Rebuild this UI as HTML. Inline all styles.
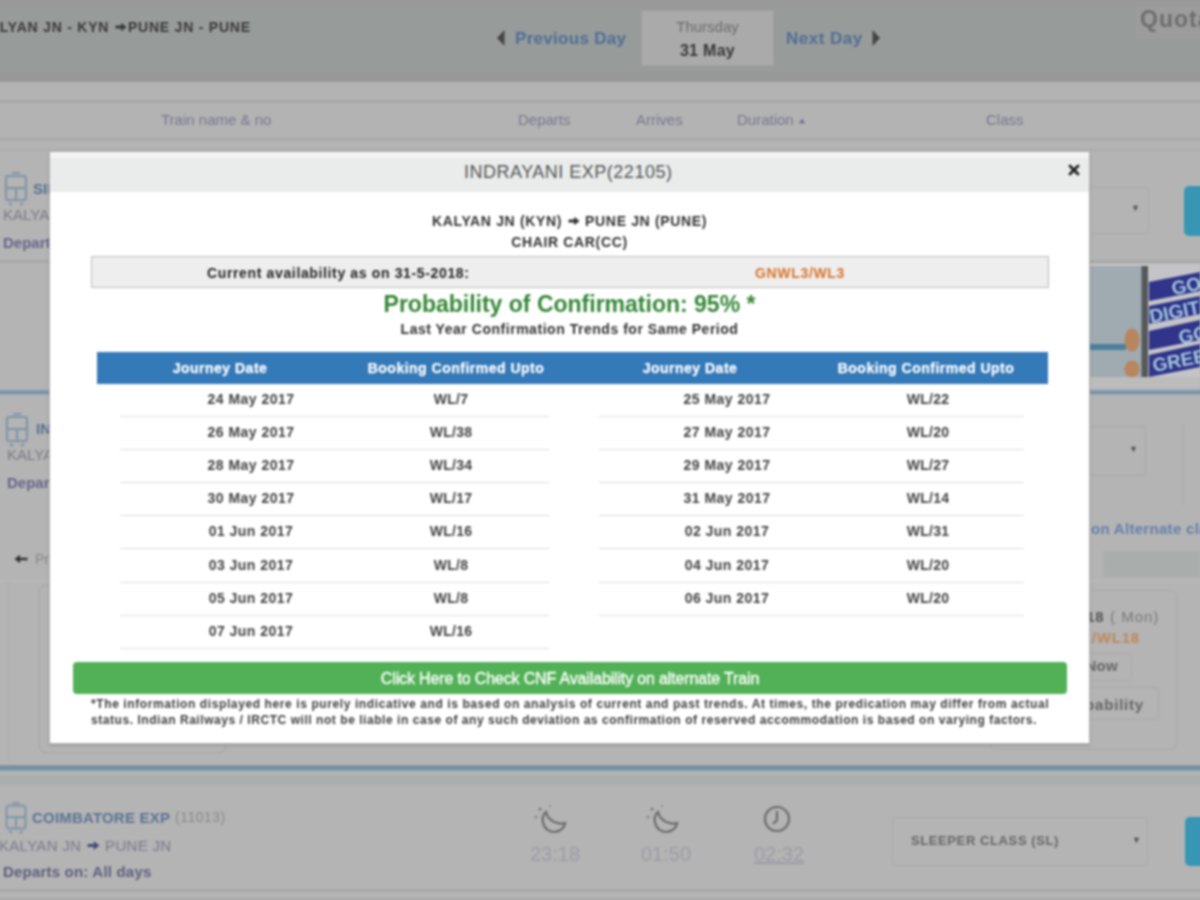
<!DOCTYPE html>
<html><head><meta charset="utf-8">
<style>
html,body{margin:0;padding:0;width:1200px;height:900px;overflow:hidden;background:#b4b4b4;font-family:"Liberation Sans",sans-serif;}
.a{position:absolute;}
.t{position:absolute;white-space:nowrap;line-height:1;}
.b{font-weight:bold;}
.c{text-align:center;}
</style></head><body>
<div style="position:absolute;left:-10px;top:-10px;width:1220px;height:920px;filter:blur(0.8px)"><div style="position:absolute;left:10px;top:10px;width:1200px;height:900px">
<!-- ===== background page ===== -->
<div class="a" style="left:-10px;top:-10px;width:1220px;height:18px;background:#999999"></div>
<div class="a" style="left:-10px;top:8px;width:1220px;height:64px;background:#979b99"></div>
<div class="a" style="left:-10px;top:72px;width:1220px;height:10px;background:#989898"></div>
<div class="a" style="left:-10px;top:82px;width:1220px;height:18px;background:#b3b3b3"></div>
<div class="a" style="left:-10px;top:100px;width:1220px;height:3px;background:#a8a8a8"></div>
<div class="a" style="left:-10px;top:103px;width:1220px;height:35px;background:#b3b3b3"></div>
<div class="a" style="left:-10px;top:138px;width:1220px;height:3px;background:#a8a8a8"></div>
<div class="a" style="left:-10px;top:149px;width:1220px;height:2px;background:#acacac"></div>

<div class="t b" style="left:-22px;top:20px;font-size:14px;letter-spacing:0.78px;color:#3a3a3a">KALYAN JN - KYN <svg width="12" height="10" viewBox="0 0 12 10" style="vertical-align:0px;margin:0 1px"><path d="M0.5 3.6 H6.2 V0.8 L11.5 5 L6.2 9.2 V6.4 H0.5 Z" fill="#3a3a3a"/></svg>PUNE JN - PUNE</div>

<!-- date nav -->
<svg class="a" style="left:495px;top:28px" width="12" height="20" viewBox="0 0 12 20"><polygon points="2,10 9.5,2 9.5,18" fill="#454545"/></svg>
<div class="t b" style="left:515px;top:30px;font-size:17px;letter-spacing:0.3px;color:#4e6e98">Previous Day</div>
<div class="a" style="left:641px;top:10px;width:133px;height:56px;background:#aaaaaa;border:1px solid #a0a0a0;box-sizing:border-box"></div>
<div class="t c" style="left:641px;width:133px;top:19px;font-size:15px;color:#6c6c6c">Thursday</div>
<div class="t b c" style="left:641px;width:133px;top:43px;font-size:16px;letter-spacing:0.3px;color:#383838">31 May</div>
<div class="t b" style="left:786px;top:30px;font-size:17px;letter-spacing:0.5px;color:#4e6e98">Next Day</div>
<svg class="a" style="left:870px;top:28px" width="12" height="20" viewBox="0 0 12 20"><polygon points="10,10 2.5,2 2.5,18" fill="#454545"/></svg>
<div class="a" style="left:1136px;top:7px;width:64px;height:32px;background:#9c9c9c"></div>
<div class="t b" style="left:1140px;top:8px;font-size:23px;letter-spacing:1px;color:#6e6e6e">Quota</div>

<!-- header row -->
<div class="t" style="left:161px;top:112px;font-size:15px;color:#77778f">Train name &amp; no</div>
<div class="t" style="left:518px;top:112px;font-size:15px;color:#77778f">Departs</div>
<div class="t" style="left:636px;top:112px;font-size:15px;color:#77778f">Arrives</div>
<div class="t" style="left:737px;top:112px;font-size:15px;color:#77778f">Duration <svg width="8" height="6" viewBox="0 0 8 6" style="vertical-align:1px"><polygon points="4,0.5 7.5,5.5 0.5,5.5" fill="#77778f"/></svg></div>
<div class="t" style="left:986px;top:112px;font-size:15px;color:#77778f">Class</div>


<!-- row 1 -->
<div class="a" style="left:-10px;top:260px;width:1220px;height:3px;background:#a9a9a9"></div>
<svg class="a" style="left:4px;top:172px" width="24" height="34" viewBox="0 0 24 34"><g fill="none" stroke="#7f96a8" stroke-width="2.2"><rect x="2" y="4" width="20" height="24" rx="2"/><line x1="2" y1="16" x2="22" y2="16"/><line x1="8" y1="1" x2="16" y2="1"/><line x1="12" y1="16" x2="12" y2="28"/><line x1="5" y1="31" x2="8" y2="33"/><line x1="19" y1="31" x2="16" y2="33"/></g></svg>
<div class="t b" style="left:33px;top:181px;font-size:15px;color:#56708f">SINHAGAD</div>
<div class="t" style="left:3px;top:207px;font-size:15px;color:#7a7a84">KALYAN</div>
<div class="t b" style="left:3px;top:235px;font-size:15px;color:#66668a">Departs</div>
<div class="a" style="left:1000px;top:187px;width:149px;height:47px;border:1px solid #a9a9a9;box-sizing:border-box;border-radius:3px"></div>
<div class="t" style="left:1131px;top:204px;font-size:9px;color:#555">&#9660;</div>
<div class="a" style="left:1184px;top:186px;width:40px;height:50px;background:#3796b4;border-radius:5px"></div>

<!-- banner -->
<div class="a" style="left:-10px;top:263px;width:1220px;height:117px;background:#b4b4b4"></div>
<svg class="a" style="left:1060px;top:264px" width="140" height="116" viewBox="0 0 140 116">
<rect x="0" y="0" width="140" height="116" fill="#c4c4c8"/>
<rect x="0" y="2" width="82" height="112" fill="#a0aab1"/>
<rect x="0" y="80" width="66" height="6" fill="#4b7f9d"/>
<ellipse cx="72" cy="76" rx="7.5" ry="11.5" fill="#b8855e"/>
<ellipse cx="72" cy="105" rx="7.5" ry="8.5" fill="#b8855e"/>
<rect x="81.5" y="2" width="6.5" height="111" fill="#54585a"/>
<polygon points="89,18 140,8 140,27 89,37" fill="#30348a"/>
<polygon points="89,42 140,32 140,50 89,60" fill="#30348a"/>
<polygon points="89,67 140,56 140,76 89,86" fill="#30348a"/>
<polygon points="89,91 140,80 140,103 89,113" fill="#30348a"/>
<g font-family="Liberation Sans" font-weight="bold" font-size="19" fill="#a3c8de">
<text x="113" y="31" transform="rotate(-11 113 31)">GO</text>
<text x="91" y="59" transform="rotate(-11 91 59)">DIGIT</text>
<text x="120" y="80" transform="rotate(-11 120 80)">GO</text>
<text x="94" y="108" transform="rotate(-11 94 108)">GREE</text>
</g>
</svg>
<div class="a" style="left:1089px;top:377px;width:111px;height:12px;background:#bcbcbc"></div>
<div class="a" style="left:-10px;top:389px;width:1220px;height:2px;background:#98aab6"></div>
<div class="a" style="left:-10px;top:391px;width:1220px;height:3px;background:#7a90a2"></div>
<div class="a" style="left:-10px;top:394px;width:1220px;height:2px;background:#a3b0b9"></div>

<!-- row 2 -->
<svg class="a" style="left:5px;top:413px" width="24" height="34" viewBox="0 0 24 34"><g fill="none" stroke="#7f96a8" stroke-width="2.2"><rect x="2" y="4" width="20" height="24" rx="2"/><line x1="2" y1="16" x2="22" y2="16"/><line x1="8" y1="1" x2="16" y2="1"/><line x1="12" y1="16" x2="12" y2="28"/><line x1="5" y1="31" x2="8" y2="33"/><line x1="19" y1="31" x2="16" y2="33"/></g></svg>
<div class="t b" style="left:36px;top:421px;font-size:15px;color:#56708f">INDRAYANI</div>
<div class="t" style="left:7px;top:447px;font-size:15px;color:#7a7a84">KALYAN</div>
<div class="t b" style="left:7px;top:475px;font-size:15px;color:#66668a">Departs</div>
<div class="a" style="left:1000px;top:426px;width:146px;height:50px;border:1px solid #a9a9a9;box-sizing:border-box;border-radius:3px"></div>
<div class="t" style="left:1129px;top:445px;font-size:9px;color:#555">&#9660;</div>
<div class="a" style="left:1183px;top:425px;width:1px;height:80px;background:#a9a9a9"></div>
<div class="t b" style="left:1091px;top:521px;font-size:15px;letter-spacing:0.3px;color:#6580aa">on Alternate class</div>
<div class="a" style="left:1103px;top:551px;width:97px;height:26px;background:#a9adac"></div>
<svg class="a" style="left:14px;top:554px" width="14" height="10" viewBox="0 0 14 10"><path d="M13.5 3.8 H6 V0.8 L0.5 5 L6 9.2 V6.2 H13.5 Z" fill="#333"/></svg>
<div class="t" style="left:35px;top:552px;font-size:14px;color:#888">Previous</div>
<div class="a" style="left:-10px;top:580px;width:1220px;height:1px;background:#bdbdbd"></div>
<div class="a" style="left:8px;top:581px;width:1px;height:180px;background:#adadad"></div>
<div class="a" style="left:39px;top:585px;width:187px;height:168px;border:1px solid #a3a3a3;border-radius:6px;box-sizing:border-box"></div>
<div class="a" style="left:990px;top:590px;width:187px;height:160px;border:1px solid #a9a9a9;border-radius:6px;box-sizing:border-box"></div>
<div class="t b" style="right:96px;top:609px;font-size:15px;letter-spacing:0.5px;color:#555">2018</div>
<div class="t" style="left:1110px;top:609px;font-size:15px;letter-spacing:1px;color:#7a7a7a">( Mon)</div>
<div class="t b" style="right:60px;top:630px;font-size:15px;letter-spacing:0.8px;color:#bf875a">GNWL/WL18</div>
<div class="a" style="left:1020px;top:653px;width:112px;height:28px;border:1px solid #a9a9a9;border-radius:4px;box-sizing:border-box"></div>
<div class="t b" style="right:82px;top:658px;font-size:15px;letter-spacing:0.3px;color:#666">Now</div>
<div class="a" style="left:1000px;top:687px;width:159px;height:33px;border:1px solid #a9a9a9;border-radius:4px;box-sizing:border-box"></div>
<div class="t b" style="right:56px;top:697px;font-size:15px;letter-spacing:0.8px;color:#666">Probability</div>
<div class="a" style="left:-10px;top:765px;width:1220px;height:2px;background:#8a949b"></div>
<div class="a" style="left:-10px;top:767px;width:1220px;height:3px;background:#7090a3"></div>
<div class="a" style="left:-10px;top:770px;width:1220px;height:2px;background:#9eadb6"></div>

<!-- row 3 -->
<div class="a" style="left:-10px;top:775px;width:1220px;height:10px;background:#aaaeac"></div>
<svg class="a" style="left:4px;top:802px" width="24" height="32" viewBox="0 0 24 34"><g fill="none" stroke="#7f96a8" stroke-width="2.2"><rect x="2" y="4" width="20" height="24" rx="2"/><line x1="2" y1="16" x2="22" y2="16"/><line x1="8" y1="1" x2="16" y2="1"/><line x1="12" y1="16" x2="12" y2="28"/><line x1="5" y1="31" x2="8" y2="33"/><line x1="19" y1="31" x2="16" y2="33"/></g></svg>
<div class="t b" style="left:32px;top:810px;font-size:15px;letter-spacing:0.2px;color:#5a7494">COIMBATORE EXP</div>
<div class="t" style="left:175px;top:810px;font-size:14px;letter-spacing:0.5px;color:#8a8a8a">(11013)</div>
<div class="t" style="left:-1px;top:838px;font-size:15px;letter-spacing:0.3px;color:#7a7a8a">KALYAN JN <svg width="13" height="11" viewBox="0 0 12 10" style="vertical-align:0px;margin:0 1px"><path d="M0.5 3.6 H6.2 V0.8 L11.5 5 L6.2 9.2 V6.4 H0.5 Z" fill="#4a4a7a"/></svg> PUNE JN</div>
<div class="t b" style="left:3px;top:864px;font-size:15px;letter-spacing:0.2px;color:#5e5e7e">Departs on: All days</div>
<svg class="a" style="left:534px;top:803px" width="34" height="32" viewBox="0 0 34 32"><path d="M12 9 C6 14 8 28 20 29 C26 29 31 24 31 20 C24 22 14 18 12 9 Z" fill="none" stroke="#6a6a6a" stroke-width="2.2"/><circle cx="6" cy="6" r="1.5" fill="#777"/><circle cx="2" cy="14" r="1.2" fill="#777"/><circle cx="16" cy="3" r="1" fill="#888"/></svg>
<svg class="a" style="left:646px;top:803px" width="34" height="32" viewBox="0 0 34 32"><path d="M12 9 C6 14 8 28 20 29 C26 29 31 24 31 20 C24 22 14 18 12 9 Z" fill="none" stroke="#6a6a6a" stroke-width="2.2"/><circle cx="6" cy="6" r="1.5" fill="#777"/><circle cx="2" cy="14" r="1.2" fill="#777"/><circle cx="16" cy="3" r="1" fill="#888"/></svg>
<svg class="a" style="left:763px;top:805px" width="30" height="30" viewBox="0 0 30 30"><circle cx="14" cy="14" r="12" fill="none" stroke="#6a6a6a" stroke-width="2.2"/><path d="M14 6 L14 15 L10 19" fill="none" stroke="#6a6a6a" stroke-width="2.2"/></svg>
<div class="t" style="left:530px;top:844px;font-size:20px;color:#9c9ca8">23:18</div>
<div class="t" style="left:641px;top:844px;font-size:20px;color:#9c9ca8">01:50</div>
<div class="t" style="left:754px;top:844px;font-size:20px;color:#9c9ca8;text-decoration:underline">02:32</div>
<div class="a" style="left:892px;top:817px;width:256px;height:49px;border:1px solid #a9a9a9;box-sizing:border-box;border-radius:3px"></div>
<div class="t b" style="left:911px;top:834px;font-size:13px;letter-spacing:0.6px;color:#666">SLEEPER CLASS (SL)</div>
<div class="t" style="left:1132px;top:836px;font-size:9px;color:#555">&#9660;</div>
<div class="a" style="left:1185px;top:817px;width:40px;height:49px;background:#3796b4;border-radius:5px"></div>
<div class="a" style="left:-10px;top:889px;width:1220px;height:3px;background:#a7a7a7"></div>
<div class="a" style="left:-10px;top:898px;width:1220px;height:12px;background:#a9a9a9"></div>

<!-- ===== modal ===== -->
<div class="a" style="left:49px;top:151px;width:1041px;height:593px;background:#fff;border:1px solid rgba(0,0,0,0.3);box-sizing:border-box;box-shadow:0 2px 3px rgba(0,0,0,0.12)"></div>
<div class="a" style="left:50px;top:152px;width:1039px;height:40px;background:#e9eceb;border-top:6px solid #f3f3f5;box-sizing:border-box"></div>
<div class="t" style="left:464px;top:163px;font-size:18px;letter-spacing:0.5px;color:#555">INDRAYANI EXP(22105)</div>
<svg class="a" style="left:1068px;top:164px" width="12" height="12" viewBox="0 0 12 12"><path d="M2 2 L10 10 M10 2 L2 10" stroke="#222" stroke-width="2.8" stroke-linecap="round"/></svg>

<div class="t b c" style="left:50px;width:1039px;top:214px;font-size:14px;letter-spacing:0.65px;color:#333">KALYAN JN (KYN) <svg width="12" height="10" viewBox="0 0 12 10" style="vertical-align:0px;margin:0 1px"><path d="M0.5 3.6 H6.2 V0.8 L11.5 5 L6.2 9.2 V6.4 H0.5 Z" fill="#333"/></svg> PUNE JN (PUNE)</div>
<div class="t b c" style="left:50px;width:1039px;top:235px;font-size:14px;letter-spacing:0.65px;color:#333">CHAIR CAR(CC)</div>

<div class="a" style="left:91px;top:256px;width:958px;height:32px;background:#eeeeee;border:1px solid #bdbdbd;box-sizing:border-box"></div>
<div class="t b" style="left:207px;top:266px;font-size:14px;letter-spacing:0.64px;color:#222">Current availability as on 31-5-2018:</div>
<div class="t b" style="left:755px;top:266px;font-size:14px;letter-spacing:0.67px;color:#d8732a">GNWL3/WL3</div>

<div class="t b c" style="left:50px;width:1039px;top:293px;font-size:23px;color:#358737">Probability of Confirmation: 95% *</div>
<div class="t b c" style="left:50px;width:1039px;top:322px;font-size:14px;letter-spacing:0.53px;color:#333">Last Year Confirmation Trends for Same Period</div>

<div class="a" style="left:97px;top:352px;width:951px;height:32px;background:#3479b8"></div>
<div class="t b c" style="left:120px;width:200px;top:361px;font-size:14px;letter-spacing:0.5px;color:#fff;-webkit-text-stroke:0.25px #fff">Journey Date</div>
<div class="t b c" style="left:356px;width:200px;top:361px;font-size:14px;letter-spacing:0.5px;color:#fff;-webkit-text-stroke:0.25px #fff">Booking Confirmed Upto</div>
<div class="t b c" style="left:590px;width:200px;top:361px;font-size:14px;letter-spacing:0.5px;color:#fff;-webkit-text-stroke:0.25px #fff">Journey Date</div>
<div class="t b c" style="left:826px;width:200px;top:361px;font-size:14px;letter-spacing:0.5px;color:#fff;-webkit-text-stroke:0.25px #fff">Booking Confirmed Upto</div>

<div class="t b c" style="left:151px;width:200px;top:392.0px;font-size:14px;letter-spacing:0.48px;color:#424242">24 May 2017</div>
<div class="t b c" style="left:351px;width:200px;top:392.0px;font-size:14px;letter-spacing:0.3px;color:#424242">WL/7</div>
<div class="a" style="left:120px;top:416px;width:429px;height:1px;background:#dddddd"></div>
<div class="t b c" style="left:151px;width:200px;top:425.1px;font-size:14px;letter-spacing:0.48px;color:#424242">26 May 2017</div>
<div class="t b c" style="left:351px;width:200px;top:425.1px;font-size:14px;letter-spacing:0.3px;color:#424242">WL/38</div>
<div class="a" style="left:120px;top:449px;width:429px;height:1px;background:#dddddd"></div>
<div class="t b c" style="left:151px;width:200px;top:458.2px;font-size:14px;letter-spacing:0.48px;color:#424242">28 May 2017</div>
<div class="t b c" style="left:351px;width:200px;top:458.2px;font-size:14px;letter-spacing:0.3px;color:#424242">WL/34</div>
<div class="a" style="left:120px;top:482px;width:429px;height:1px;background:#dddddd"></div>
<div class="t b c" style="left:151px;width:200px;top:491.3px;font-size:14px;letter-spacing:0.48px;color:#424242">30 May 2017</div>
<div class="t b c" style="left:351px;width:200px;top:491.3px;font-size:14px;letter-spacing:0.3px;color:#424242">WL/17</div>
<div class="a" style="left:120px;top:515px;width:429px;height:1px;background:#dddddd"></div>
<div class="t b c" style="left:151px;width:200px;top:524.4px;font-size:14px;letter-spacing:0.48px;color:#424242">01 Jun 2017</div>
<div class="t b c" style="left:351px;width:200px;top:524.4px;font-size:14px;letter-spacing:0.3px;color:#424242">WL/16</div>
<div class="a" style="left:120px;top:548px;width:429px;height:1px;background:#dddddd"></div>
<div class="t b c" style="left:151px;width:200px;top:557.5px;font-size:14px;letter-spacing:0.48px;color:#424242">03 Jun 2017</div>
<div class="t b c" style="left:351px;width:200px;top:557.5px;font-size:14px;letter-spacing:0.3px;color:#424242">WL/8</div>
<div class="a" style="left:120px;top:582px;width:429px;height:1px;background:#dddddd"></div>
<div class="t b c" style="left:151px;width:200px;top:590.6px;font-size:14px;letter-spacing:0.48px;color:#424242">05 Jun 2017</div>
<div class="t b c" style="left:351px;width:200px;top:590.6px;font-size:14px;letter-spacing:0.3px;color:#424242">WL/8</div>
<div class="a" style="left:120px;top:615px;width:429px;height:1px;background:#dddddd"></div>
<div class="t b c" style="left:151px;width:200px;top:623.7px;font-size:14px;letter-spacing:0.48px;color:#424242">07 Jun 2017</div>
<div class="t b c" style="left:351px;width:200px;top:623.7px;font-size:14px;letter-spacing:0.3px;color:#424242">WL/16</div>
<div class="a" style="left:120px;top:648px;width:429px;height:1px;background:#dddddd"></div>
<div class="t b c" style="left:627px;width:200px;top:392.0px;font-size:14px;letter-spacing:0.48px;color:#424242">25 May 2017</div>
<div class="t b c" style="left:828px;width:200px;top:392.0px;font-size:14px;letter-spacing:0.3px;color:#424242">WL/22</div>
<div class="a" style="left:599px;top:416px;width:425px;height:1px;background:#dddddd"></div>
<div class="t b c" style="left:627px;width:200px;top:425.1px;font-size:14px;letter-spacing:0.48px;color:#424242">27 May 2017</div>
<div class="t b c" style="left:828px;width:200px;top:425.1px;font-size:14px;letter-spacing:0.3px;color:#424242">WL/20</div>
<div class="a" style="left:599px;top:449px;width:425px;height:1px;background:#dddddd"></div>
<div class="t b c" style="left:627px;width:200px;top:458.2px;font-size:14px;letter-spacing:0.48px;color:#424242">29 May 2017</div>
<div class="t b c" style="left:828px;width:200px;top:458.2px;font-size:14px;letter-spacing:0.3px;color:#424242">WL/27</div>
<div class="a" style="left:599px;top:482px;width:425px;height:1px;background:#dddddd"></div>
<div class="t b c" style="left:627px;width:200px;top:491.3px;font-size:14px;letter-spacing:0.48px;color:#424242">31 May 2017</div>
<div class="t b c" style="left:828px;width:200px;top:491.3px;font-size:14px;letter-spacing:0.3px;color:#424242">WL/14</div>
<div class="a" style="left:599px;top:515px;width:425px;height:1px;background:#dddddd"></div>
<div class="t b c" style="left:627px;width:200px;top:524.4px;font-size:14px;letter-spacing:0.48px;color:#424242">02 Jun 2017</div>
<div class="t b c" style="left:828px;width:200px;top:524.4px;font-size:14px;letter-spacing:0.3px;color:#424242">WL/31</div>
<div class="a" style="left:599px;top:548px;width:425px;height:1px;background:#dddddd"></div>
<div class="t b c" style="left:627px;width:200px;top:557.5px;font-size:14px;letter-spacing:0.48px;color:#424242">04 Jun 2017</div>
<div class="t b c" style="left:828px;width:200px;top:557.5px;font-size:14px;letter-spacing:0.3px;color:#424242">WL/20</div>
<div class="a" style="left:599px;top:582px;width:425px;height:1px;background:#dddddd"></div>
<div class="t b c" style="left:627px;width:200px;top:590.6px;font-size:14px;letter-spacing:0.48px;color:#424242">06 Jun 2017</div>
<div class="t b c" style="left:828px;width:200px;top:590.6px;font-size:14px;letter-spacing:0.3px;color:#424242">WL/20</div>
<div class="a" style="left:599px;top:615px;width:425px;height:1px;background:#dddddd"></div>

<div class="a" style="left:73px;top:662px;width:994px;height:32px;background:#52b157;border-radius:4px"></div>
<div class="t c" style="left:73px;width:994px;top:671px;font-size:16px;letter-spacing:-0.15px;color:#fff;-webkit-text-stroke:0.35px #fff">Click Here to Check CNF Availability on alternate Train</div>
<div class="t b" style="left:91px;top:696px;font-size:12px;letter-spacing:0.6px;color:#3e3e3e;line-height:16px">*The information displayed here is purely indicative and is based on analysis of current and past trends. At times, the predication may differ from actual<br><span style="letter-spacing:0.55px">status. Indian Railways / IRCTC will not be liable in case of any such deviation as confirmation of reserved accommodation is based on varying factors.</span></div>

</div></div>
</body></html>
